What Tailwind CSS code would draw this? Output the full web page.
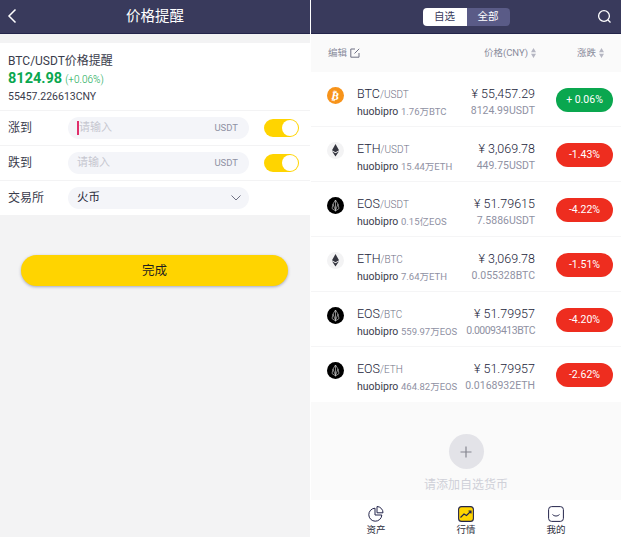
<!DOCTYPE html>
<html lang="zh">
<head>
<meta charset="UTF-8">
<title>价格提醒</title>
<script src="https://cdn.jsdelivr.net/npm/@tailwindcss/browser@4"></script>
</head>
<body class="w-[621px] h-[537px] overflow-hidden bg-white font-['Roboto','Noto_Sans_CJK_SC',sans-serif] text-[#3a3c4c]">
<div class="flex h-[537px]">

  <!-- left: price alert -->
  <div class="w-[310px] h-full flex flex-col bg-[#f3f3f4]">
    <div class="h-[34px] shrink-0 bg-[#393a5c] border-b border-[#23244a] flex items-center justify-center relative">
      <svg class="absolute left-[7px] top-[8px]" width="10" height="16" viewBox="0 0 10 16" fill="none" stroke="#fff" stroke-width="1.5"><path d="M8.500 1.500L2 8l6.500 6.500"/></svg>
      <span class="text-white text-[14.5px]">价格提醒</span>
    </div>
    <div class="mt-[9px] bg-white h-[172px] flex flex-col">
      <div class="h-[68px] px-[8px] pt-[10px] border-b border-[#f3f3f4]">
        <div class="text-[12px] leading-[16px]">BTC/USDT价格提醒</div>
        <div class="flex items-baseline gap-[3px] leading-[20px] text-[#0aa74f]">
          <span class="text-[14.5px] font-bold">8124.98</span><span class="text-[10px] font-light">(+0.06%)</span>
        </div>
        <div class="text-[10.5px] leading-[14px]">55457.226613CNY</div>
      </div>
      <div class="h-[35px] px-[8px] flex items-center border-b border-[#f3f3f4]">
        <span class="w-[60px] text-[12px]">涨到</span>
        <div class="w-[181px] h-[22px] rounded-full bg-[#f4f5f9] flex items-center justify-between pl-[9px] pr-[11px]">
          <span class="text-[11px] text-[#c6c7d0] border-l-2 border-[#e0306c] leading-[14px]">请输入</span>
          <span class="text-[9.5px] text-[#8f91a3]">USDT</span>
        </div>
        <div class="ml-[15px] w-[35px] h-[18px] rounded-full bg-[#ffd400] flex justify-end p-[1px]"><div class="w-[16px] h-[16px] rounded-full bg-white"></div></div>
      </div>
      <div class="h-[35px] px-[8px] flex items-center border-b border-[#f3f3f4]">
        <span class="w-[60px] text-[12px]">跌到</span>
        <div class="w-[181px] h-[22px] rounded-full bg-[#f4f5f9] flex items-center justify-between pl-[9px] pr-[11px]">
          <span class="text-[11px] text-[#c6c7d0]">请输入</span>
          <span class="text-[9.5px] text-[#8f91a3]">USDT</span>
        </div>
        <div class="ml-[15px] w-[35px] h-[18px] rounded-full bg-[#ffd400] flex justify-end p-[1px]"><div class="w-[16px] h-[16px] rounded-full bg-white"></div></div>
      </div>
      <div class="h-[34px] px-[8px] flex items-center">
        <span class="w-[60px] text-[12px]">交易所</span>
        <div class="w-[181px] h-[22px] rounded-full bg-[#f4f5f9] flex items-center justify-between pl-[9px] pr-[8px]">
          <span class="text-[11.5px] text-[#2a2b3a]">火币</span>
          <svg width="10" height="6" viewBox="0 0 10 6" fill="none" stroke="#6f7184" stroke-width="1"><path d="M.5.5L5 5L9.5.5"/></svg>
        </div>
      </div>
    </div>
    <div class="mt-[40px] ml-[21px] mr-[22px] h-[31px] pt-[1px] rounded-full bg-[#ffd400] shadow-[0_1px_3px_rgba(70,80,130,0.45)] flex items-center justify-center text-[12.5px] text-[#1f1f1f]">完成</div>
  </div>

  <!-- right: market list -->
  <div class="ml-[1px] w-[310px] h-full flex flex-col bg-[#fafafa]">
    <div class="h-[34px] shrink-0 bg-[#393a5c] border-b border-[#23244a] flex items-center justify-center relative">
      <div class="flex h-[18px] text-[10.5px] rounded-[4px] overflow-hidden">
        <span class="w-[44px] bg-white text-[#393a5c] flex items-center justify-center">自选</span>
        <span class="w-[43px] bg-[#5a5b87] text-white flex items-center justify-center">全部</span>
      </div>
      <svg class="absolute right-[9px] top-[9px]" width="15" height="15" viewBox="0 0 15 15" fill="none" stroke="#fff" stroke-width="1.3"><circle cx="7" cy="7" r="5.400"/><path d="M11 11l2.500 2.500"/></svg>
    </div>
    <div class="h-[38px] flex items-center text-[9.5px] text-[#8a8c9c] pl-[17px] pr-[17px]">
      <span>编辑</span>
      <svg class="ml-[3px]" width="10" height="10" viewBox="0 0 10 10" fill="none" stroke="#6f7184" stroke-width="1"><path d="M5 1H.8v8.200H9V5M4.500 5.500L9.200.8"/></svg>
      <span class="ml-auto">价格(CNY)</span>
      <svg class="ml-[3px]" width="5" height="10" viewBox="0 0 5 10" fill="#b5b6c2"><path d="M2.500 0L5 4.200H0zM2.500 10L0 5.800H5z"/></svg>
      <span class="ml-[41px]">涨跌</span>
      <svg class="ml-[3px]" width="5" height="10" viewBox="0 0 5 10" fill="#b5b6c2"><path d="M2.500 0L5 4.200H0zM2.500 10L0 5.800H5z"/></svg>
    </div>

    <div class="bg-white">
      <div class="h-[55px] flex border-b border-[#f5f5f6] pl-[16px] pr-[8px]">
        <svg class="mt-[15px]" width="17" height="17" viewBox="0 0 17 17"><circle cx="8.500" cy="8.500" r="8.500" fill="#f7931a"/><text x="8.500" y="12.500" text-anchor="middle" font-size="11" font-weight="700" font-family="DejaVu Sans" fill="#fff" transform="rotate(12 8.500 8.500)">₿</text></svg>
        <div class="ml-[13px] flex-1 pt-[13px]">
          <div class="text-[12.5px] leading-[17px] font-light text-[#22243a]">BTC<span class="text-[10px] text-[#6f7186]">/USDT</span></div>
          <div class="text-[10.5px] leading-[17px]">huobipro <span class="text-[9.5px] text-[#8f91a3]">1.76万BTC</span></div>
        </div>
        <div class="text-right pt-[13px]">
          <div class="text-[12.5px] leading-[17px] font-light text-[#22243a]">¥ 55,457.29</div>
          <div class="text-[10.5px] leading-[17px] text-[#8f91a3]">8124.99USDT</div>
        </div>
        <div class="ml-[21px] mt-[16px] w-[57px] h-[24px] rounded-full bg-[#0aa74f] text-white text-[10.5px] flex items-center justify-center">+ 0.06%</div>
      </div>
      <div class="h-[55px] flex border-b border-[#f5f5f6] pl-[16px] pr-[8px]">
        <svg class="mt-[15px]" width="17" height="17" viewBox="0 0 17 17"><circle cx="8.500" cy="8.500" r="8.500" fill="#f3f3f4"/><path d="M8.500 2L5 8.300l3.500 2 3.500-2zM5 9.300l3.500 5.200 3.500-5.200-3.500 2z" fill="#35363f"/></svg>
        <div class="ml-[13px] flex-1 pt-[13px]">
          <div class="text-[12.5px] leading-[17px] font-light text-[#22243a]">ETH<span class="text-[10px] text-[#6f7186]">/USDT</span></div>
          <div class="text-[10.5px] leading-[17px]">huobipro <span class="text-[9.5px] text-[#8f91a3]">15.44万ETH</span></div>
        </div>
        <div class="text-right pt-[13px]">
          <div class="text-[12.5px] leading-[17px] font-light text-[#22243a]">¥ 3,069.78</div>
          <div class="text-[10.5px] leading-[17px] text-[#8f91a3]">449.75USDT</div>
        </div>
        <div class="ml-[21px] mt-[16px] w-[57px] h-[24px] rounded-full bg-[#ee2d1f] text-white text-[10.5px] flex items-center justify-center">-1.43%</div>
      </div>
      <div class="h-[55px] flex border-b border-[#f5f5f6] pl-[16px] pr-[8px]">
        <svg class="mt-[15px]" width="17" height="17" viewBox="0 0 17 17"><circle cx="8.500" cy="8.500" r="8.500" fill="#000"/><path d="M8.500 3L6 7l-1 4.500 3.500 2.500 3.500-2.500L11 7zM8.500 3v11M6 7l2.500 6.500L11 7" fill="none" stroke="#ddd" stroke-width=".6"/></svg>
        <div class="ml-[13px] flex-1 pt-[13px]">
          <div class="text-[12.5px] leading-[17px] font-light text-[#22243a]">EOS<span class="text-[10px] text-[#6f7186]">/USDT</span></div>
          <div class="text-[10.5px] leading-[17px]">huobipro <span class="text-[9.5px] text-[#8f91a3]">0.15亿EOS</span></div>
        </div>
        <div class="text-right pt-[13px]">
          <div class="text-[12.5px] leading-[17px] font-light text-[#22243a]">¥ 51.79615</div>
          <div class="text-[10.5px] leading-[17px] text-[#8f91a3]">7.5886USDT</div>
        </div>
        <div class="ml-[21px] mt-[16px] w-[57px] h-[24px] rounded-full bg-[#ee2d1f] text-white text-[10.5px] flex items-center justify-center">-4.22%</div>
      </div>
      <div class="h-[55px] flex border-b border-[#f5f5f6] pl-[16px] pr-[8px]">
        <svg class="mt-[15px]" width="17" height="17" viewBox="0 0 17 17"><circle cx="8.500" cy="8.500" r="8.500" fill="#f3f3f4"/><path d="M8.500 2L5 8.300l3.500 2 3.500-2zM5 9.300l3.500 5.200 3.500-5.200-3.500 2z" fill="#35363f"/></svg>
        <div class="ml-[13px] flex-1 pt-[13px]">
          <div class="text-[12.5px] leading-[17px] font-light text-[#22243a]">ETH<span class="text-[10px] text-[#6f7186]">/BTC</span></div>
          <div class="text-[10.5px] leading-[17px]">huobipro <span class="text-[9.5px] text-[#8f91a3]">7.64万ETH</span></div>
        </div>
        <div class="text-right pt-[13px]">
          <div class="text-[12.5px] leading-[17px] font-light text-[#22243a]">¥ 3,069.78</div>
          <div class="text-[10.5px] leading-[17px] text-[#8f91a3]">0.055328BTC</div>
        </div>
        <div class="ml-[21px] mt-[16px] w-[57px] h-[24px] rounded-full bg-[#ee2d1f] text-white text-[10.5px] flex items-center justify-center">-1.51%</div>
      </div>
      <div class="h-[55px] flex border-b border-[#f5f5f6] pl-[16px] pr-[8px]">
        <svg class="mt-[15px]" width="17" height="17" viewBox="0 0 17 17"><circle cx="8.500" cy="8.500" r="8.500" fill="#000"/><path d="M8.500 3L6 7l-1 4.500 3.500 2.500 3.500-2.500L11 7zM8.500 3v11M6 7l2.500 6.500L11 7" fill="none" stroke="#ddd" stroke-width=".6"/></svg>
        <div class="ml-[13px] flex-1 pt-[13px]">
          <div class="text-[12.5px] leading-[17px] font-light text-[#22243a]">EOS<span class="text-[10px] text-[#6f7186]">/BTC</span></div>
          <div class="text-[10.5px] leading-[17px]">huobipro <span class="text-[9.5px] text-[#8f91a3]">559.97万EOS</span></div>
        </div>
        <div class="text-right pt-[13px]">
          <div class="text-[12.5px] leading-[17px] font-light text-[#22243a]">¥ 51.79957</div>
          <div class="text-[10.5px] leading-[17px] text-[#8f91a3] tracking-[-0.5px]">0.00093413BTC</div>
        </div>
        <div class="ml-[21px] mt-[16px] w-[57px] h-[24px] rounded-full bg-[#ee2d1f] text-white text-[10.5px] flex items-center justify-center">-4.20%</div>
      </div>
      <div class="h-[55px] flex pl-[16px] pr-[8px]">
        <svg class="mt-[15px]" width="17" height="17" viewBox="0 0 17 17"><circle cx="8.500" cy="8.500" r="8.500" fill="#000"/><path d="M8.500 3L6 7l-1 4.500 3.500 2.500 3.500-2.500L11 7zM8.500 3v11M6 7l2.500 6.500L11 7" fill="none" stroke="#ddd" stroke-width=".6"/></svg>
        <div class="ml-[13px] flex-1 pt-[13px]">
          <div class="text-[12.5px] leading-[17px] font-light text-[#22243a]">EOS<span class="text-[10px] text-[#6f7186]">/ETH</span></div>
          <div class="text-[10.5px] leading-[17px]">huobipro <span class="text-[9.5px] text-[#8f91a3]">464.82万EOS</span></div>
        </div>
        <div class="text-right pt-[13px]">
          <div class="text-[12.5px] leading-[17px] font-light text-[#22243a]">¥ 51.79957</div>
          <div class="text-[10.5px] leading-[17px] text-[#8f91a3]">0.0168932ETH</div>
        </div>
        <div class="ml-[21px] mt-[16px] w-[57px] h-[24px] rounded-full bg-[#ee2d1f] text-white text-[10.5px] flex items-center justify-center">-2.62%</div>
      </div>
    </div>

    <div class="flex-1 flex flex-col items-center pt-[32px]">
      <div class="w-[35px] h-[35px] rounded-full bg-[#e3e3e8] flex items-center justify-center">
        <svg width="12" height="12" viewBox="0 0 12 12" stroke="#85868f" stroke-width="1.200"><path d="M6 .5v11M.5 6h11"/></svg>
      </div>
      <span class="mt-[8px] text-[12px] leading-[16px] text-[#cfd0d8]">请添加自选货币</span>
    </div>

    <div class="h-[37px] bg-white flex justify-center text-[9.5px] text-[#2a2b3a]">
      <div class="w-[90px] flex flex-col items-center pt-[6px]">
        <svg width="16" height="16" viewBox="0 0 16 16" fill="none" stroke="#23244a" stroke-width="1"><path d="M7 2.200a6.500 6.500 0 1 0 6.800 6.800H7z"/><path d="M9 .5v6.300h6A6.200 6.200 0 0 0 9 .5z"/></svg>
        <span class="mt-[1px] leading-[14px]">资产</span>
      </div>
      <div class="w-[90px] flex flex-col items-center pt-[6px]">
        <svg width="16" height="16" viewBox="0 0 16 16" fill="none"><rect x=".6" y=".6" width="14.800" height="14.800" rx="3" fill="#ffd400" stroke="#23244a" stroke-width="1.100"/><path d="M2.500 11.500l3.500-3.500 2.500 1.500 4.500-4.500M10.500 5h2.500v2.500" stroke="#23244a" stroke-width="1.100"/></svg>
        <span class="mt-[1px] leading-[14px]">行情</span>
      </div>
      <div class="w-[90px] flex flex-col items-center pt-[6px]">
        <svg width="16" height="16" viewBox="0 0 16 16" fill="none" stroke="#23244a" stroke-width="1"><rect x=".6" y=".6" width="14.800" height="14.800" rx="3"/><path d="M4.500 8.500c2 2 5 2 7 0"/></svg>
        <span class="mt-[1px] leading-[14px]">我的</span>
      </div>
    </div>
  </div>
</div>
</body>
</html>
